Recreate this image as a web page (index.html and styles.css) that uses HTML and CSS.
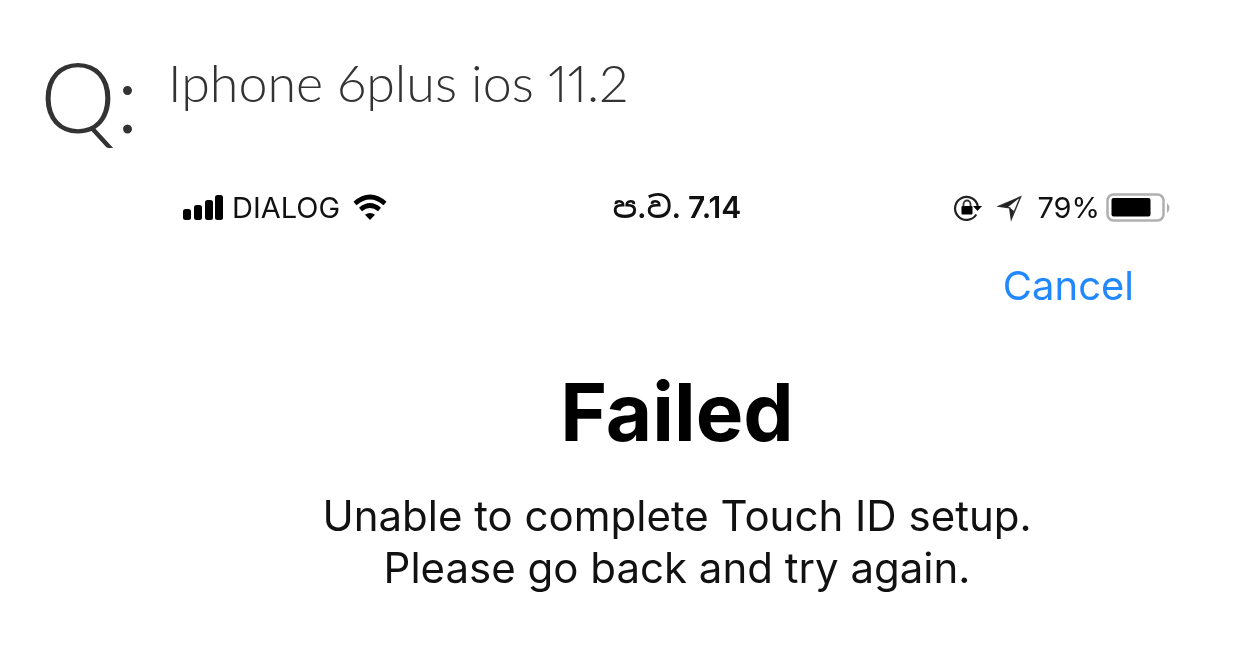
FILE: index.html
```html
<!DOCTYPE html>
<html lang="en">
<head>
<meta charset="utf-8">
<meta name="viewport" content="width=device-width, initial-scale=1">
<title>Iphone 6plus ios 11.2</title>
<link rel="stylesheet" href="styles.css">
</head>
<body>
<main class="question">
  <div class="question-mark">Q:</div>
  <article class="question-body">
    <h1 class="question-title">Iphone 6plus ios 11.2</h1>
    <section class="phone">
      <div class="status">
        <div class="status-left">
          <svg class="signal" width="42" height="28" viewBox="0 0 42 28" aria-hidden="true"><rect x="1" y="15" width="8" height="11" rx="2.5"/><rect x="12" y="11" width="8" height="15" rx="2.5"/><rect x="23" y="6" width="8" height="20" rx="2.5"/><rect x="33" y="1" width="8" height="25" rx="2.5"/></svg>
          <span class="carrier">DIALOG</span>
          <svg class="wifi" width="36" height="28" viewBox="0 0 36 28" aria-hidden="true"><path d="M3 9.5Q18-3.5 33 9.5M8.5 15.500Q18 7.500 27.5 15.500" fill="none" stroke="#000" stroke-width="4.6"/><path d="M18 26l-5-5.2q5-3.8 10 0z"/></svg>
        </div>
        <time class="clock" lang="si">ප.ව. 7.14</time>
        <div class="status-right">
          <svg class="lock" width="30" height="28" viewBox="0 0 30 28" aria-hidden="true"><path d="M23.3 20.500A11.500 11.500 0 1 1 24.800 12" fill="none" stroke="#222" stroke-width="2.2"/><path d="M20 12h9l-4.500 5z"/><rect x="8.500" y="12" width="11" height="8.500" rx="1"/><path d="M10.500 12.500V10a3.500 3.500 0 0 1 7 0v2.500" fill="none" stroke="#333" stroke-width="1.800"/></svg>
          <svg class="arrow" width="26" height="28" viewBox="0 0 26 28" aria-hidden="true"><path d="M23.500 3L2 12.300L12.700 13.800L14.300 25Z" fill="#fff" stroke="#333" stroke-width="1.500"/><path d="M2 12.300L23.500 3L10.500 13.500zM12.700 13.800L14.300 25L17 17z" fill="#222"/></svg>
          <span class="percent">79%</span>
          <svg class="battery" width="66" height="30" viewBox="0 0 66 30" aria-hidden="true"><rect x="1.500" y="1.500" width="56" height="26" rx="6" fill="none" stroke="#b0b0b0" stroke-width="2.500"/><rect x="5.500" y="5" width="39" height="18.500" rx="2"/><path d="M61 10q5 5 0 10z" fill="#b0b0b0"/></svg>
        </div>
      </div>
      <div class="nav"><button class="cancel" type="button">Cancel</button></div>
      <h2 class="result">Failed</h2>
      <p class="message">Unable to complete Touch ID setup.<br>Please go back and try again.</p>
    </section>
  </article>
</main>
</body>
</html>
```
FILE: styles.css
```css
body {
  margin: 0;
  background: #fff;
  color: #333;
  font-family: Inter, "Liberation Sans", sans-serif;
}
.question {
  display: grid;
  grid-template-columns: 128px 1fr;
  padding: 46px 80px 64px 40px;
}
.question-mark,
.question-title {
  font-family: Lato, "Open Sans", sans-serif;
  font-weight: 300;
}
.question-mark {
  font-size: 96px;
  line-height: 100px;
}
.question-title {
  margin: 0;
  font-size: 52px;
  font-variant-numeric: proportional-nums;
  line-height: 72px;
}
.phone {
  padding: 70px 6px 0 14px;
  color: #111;
  filter: blur(0.6px);
}
.status {
  display: grid;
  grid-template-columns: 1fr auto 1fr;
  align-items: center;
  height: 38px;
  font-size: 29px;
}
.status-left,
.status-right {
  display: flex;
  align-items: center;
}
.status-left {
  gap: 8px;
}
.wifi {
  margin-left: 4px;
}
.status-right {
  justify-content: flex-end;
  gap: 8px;
}
.arrow {
  margin: 0 6px;
}
.clock {
  font-family: Inter, "Noto Sans Sinhala", "Noto Sans", sans-serif;
  font-size: 30px;
  font-weight: 600;
}
.nav {
  display: flex;
  justify-content: flex-end;
  padding: 36px 38px 0 0;
}
.cancel {
  padding: 0;
  border: 0;
  background: none;
  color: #2188ff;
  font-family: inherit;
  font-size: 40px;
  line-height: 48px;
}
.result {
  margin: 50px 0 0;
  color: #000;
  font-size: 80px;
  font-weight: 700;
  line-height: 104px;
  text-align: center;
}
.message {
  margin: 26px 0 0;
  font-size: 42px;
  line-height: 52px;
  text-align: center;
}
.percent {
  margin-right: -2px;
}
```
